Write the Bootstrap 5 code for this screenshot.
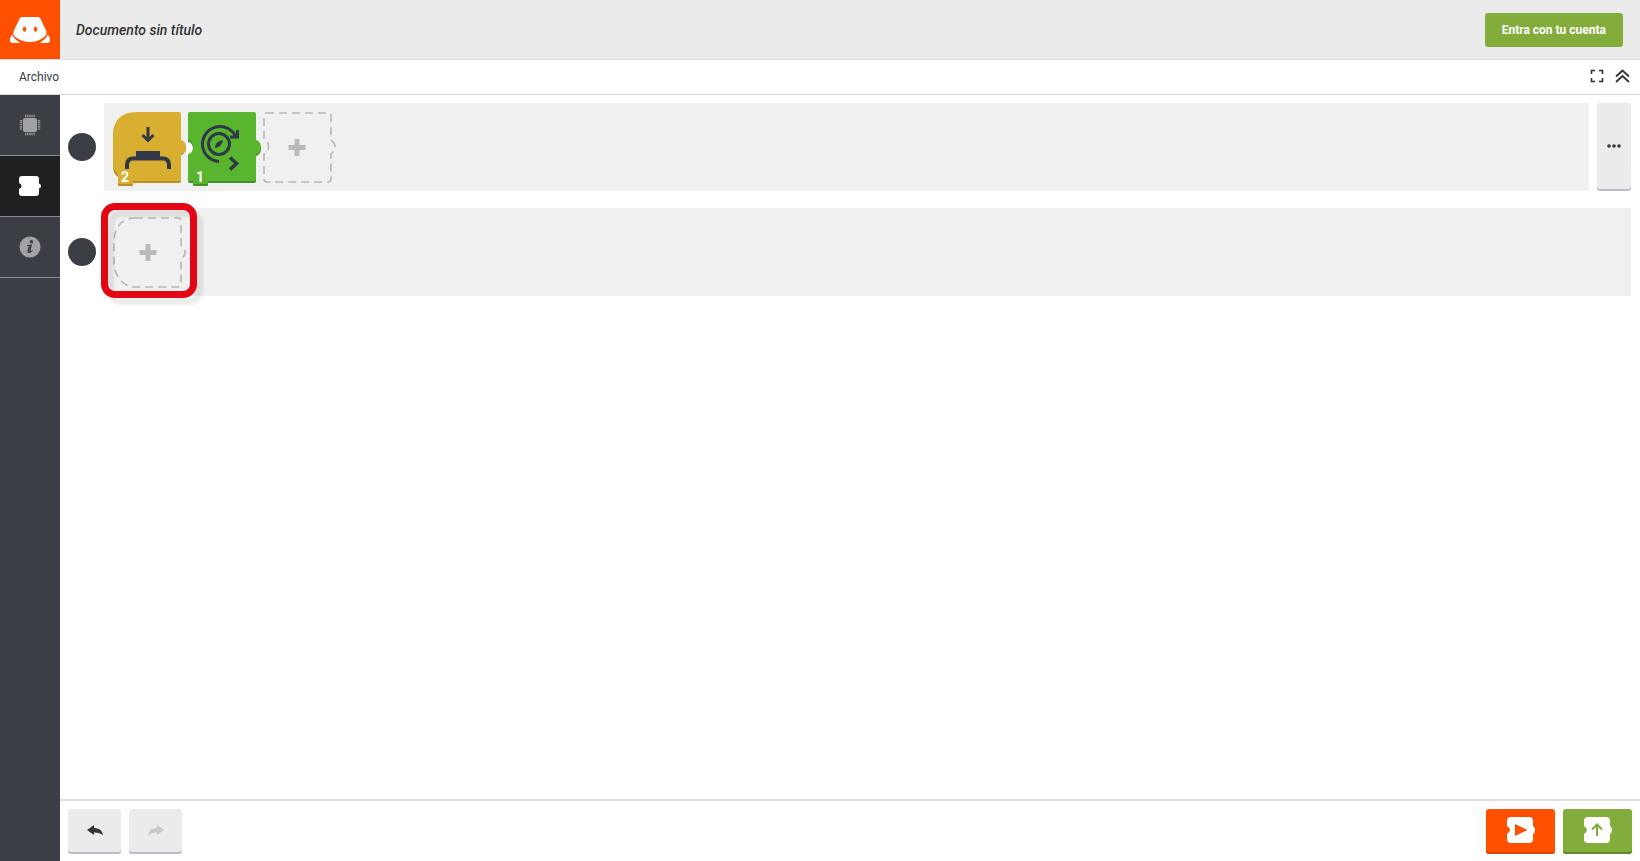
<!DOCTYPE html>
<html lang="es">
<head>
<meta charset="utf-8">
<meta name="viewport" content="width=device-width, initial-scale=1">
<title>Documento sin título</title>
<link href="https://cdn.jsdelivr.net/npm/bootstrap@5.3.0/dist/css/bootstrap.min.css" rel="stylesheet">
<style>
body{font-family:Roboto,"Liberation Sans",sans-serif;font-size:12px;line-height:16px;color:#373b44;background:#fff}
svg{display:block;overflow:visible}
.topbar{height:60px;background:#ebebeb;border-bottom:1px solid #ddd}
.brand{width:60px;height:59px;background:#ff5000}
.doc-title{font-size:14px;line-height:20px;font-weight:500;font-style:italic;color:#373435;padding-left:16px}
.btn-login{--bs-btn-bg:#82ad3a;--bs-btn-color:#fff;--bs-btn-hover-bg:#759c34;--bs-btn-hover-color:#fff;--bs-btn-border-width:0;font-size:12px;line-height:18px;font-weight:700;padding:8px 17px;border-radius:3px;margin-right:17px}
.menubar{height:35px;border-bottom:1px solid #d4d4d4;padding:0 10px 0 19px}
.menubar button,.sidebar button,.slot{background:none;border:0;padding:0;color:inherit}
.menu-tools{gap:11px;padding-bottom:2px}
.sidebar{width:60px;background:#3b3e45}
.sidebar button{height:61px;border-bottom:1px solid #8b8d92;color:#a0a2a6}
.sidebar button.active{background:#1f2022;color:#fff}
.workspace{padding:8px 9px 0 8px;gap:17px}
.line-dot{width:28px;height:28px;border-radius:50%;background:#3b3e45;margin-right:8px}
.track{height:88px;background:#f0f0f0;padding:9px}
.tile{width:75px;height:70px;position:relative}
.tile .num{position:absolute;left:8px;bottom:-3px;font-size:14px;line-height:16px;font-weight:700;color:#fff}
.slot:hover path{stroke:#888}
.mark-ring{position:absolute;left:-12px;top:-14px;width:96px;height:95px;border:7px solid #e30613;border-radius:14px;filter:drop-shadow(6px 7px 1px rgba(0,0,0,.07));pointer-events:none}
.btn-flat{--bs-btn-bg:#ebebeb;--bs-btn-border-width:0;--bs-btn-disabled-bg:#ebebeb;--bs-btn-disabled-opacity:1;--bs-btn-color:#373435;--bs-btn-disabled-color:#c8c8c8;--bs-btn-hover-bg:#e0e0e0;border-radius:3px;box-shadow:inset 0 -2px 0 #b7bdc6;padding:0}
.btn-more{width:34px;height:88px;margin-left:8px}
.bottombar{height:62px;border-top:2px solid #e0e0e0;padding:0 8px}
.btn-hist{width:53px;height:45px}
.btn-run{width:69px;height:45px;padding:0 0 2px;border-radius:3px;--bs-btn-border-width:0}
.run-orange{--bs-btn-bg:#ff5000;--bs-btn-hover-bg:#e84900;box-shadow:inset 0 -2px 0 #d74707}
.run-green{--bs-btn-bg:#82ad3a;--bs-btn-hover-bg:#759c34;box-shadow:inset 0 -2px 0 #648629}
</style>
</head>
<body>
<div class="d-flex flex-column vh-100 overflow-hidden">
<header class="topbar d-flex align-items-center flex-shrink-0">
  <a href="#" class="brand d-block" aria-label="Inicio">
    <svg width="60" height="59" viewBox="0 0 60 59"><g fill="#fff"><path d="M22 17H38Q39.500 17 40.300 18.500L46.300 31Q47.300 34 45 36.500Q38 42 30 42Q22 42 14.500 36.500Q12.500 34 13.700 31L19.700 18.500Q20.500 17 22 17Z"/><path d="M12 34.500Q14 39 20 42.500L18 43H12.500Q10 42.500 10 40.500Q10 37.500 12 34.500ZM48 34.500Q46 39 40 42.500L42 43H47.500Q50 42.500 50 40.500Q50 37.500 48 34.500Z"/></g><g fill="#ff5000"><ellipse cx="24.500" cy="29.300" rx="1.700" ry="2.700"/><ellipse cx="35.500" cy="29.300" rx="1.700" ry="2.700"/></g></svg>
  </a>
  <div class="doc-title">Documento sin título</div>
  <button type="button" class="btn btn-login ms-auto">Entra con tu cuenta</button>
</header>
<nav class="menubar d-flex align-items-center flex-shrink-0">
  <button type="button">Archivo</button>
  <div class="menu-tools d-flex align-items-center ms-auto">
    <button type="button" aria-label="Pantalla completa"><svg width="14" height="14" viewBox="0 0 14 14" fill="none" stroke="#303036" stroke-width="1.600"><path d="M1.500 5V1.500H5M9 1.500H12.500V5M12.500 9V12.500H9M5 12.500H1.500V9"/></svg></button>
    <button type="button" aria-label="Contraer"><svg width="15" height="14" viewBox="0 0 15 14" fill="none" stroke="#303036" stroke-width="1.800"><path d="M1 7.500L7.500 1.500L14 7.500M1 13L7.500 7L14 13"/></svg></button>
  </div>
</nav>
<div class="d-flex flex-grow-1">
  <aside class="sidebar d-flex flex-column flex-shrink-0">
    <button type="button" class="d-flex justify-content-center align-items-center" aria-label="Hardware"><svg width="22" height="22" viewBox="0 0 22 22"><rect x="4" y="4" width="14" height="14" rx="2" fill="currentColor"/><path d="M6 2H16M6 20H16M2 6V16M20 6V16" stroke="#909297" stroke-width="2.500" stroke-dasharray="1.400 .700"/></svg></button>
    <button type="button" class="active d-flex justify-content-center align-items-center" aria-label="Bloques"><svg width="22" height="20" viewBox="0 0 22 20" fill="currentColor"><path d="M3 0H17Q20 0 20 3V7.500Q22 8 22 10Q22 12 20 12.500V17Q20 20 17 20H3Q0 20 0 17V13Q2.500 12 2.500 10Q2.500 8 0 7V3Q0 0 3 0Z"/></svg></button>
    <button type="button" class="d-flex justify-content-center align-items-center" aria-label="Información"><svg width="22" height="22" viewBox="0 0 22 22"><circle cx="11" cy="11" r="10.500" fill="currentColor"/><g fill="#3b3e45"><circle cx="12.400" cy="5.700" r="1.700"/><path d="M8 9L13 8.500L11.500 14.500Q11.500 15.500 13.500 14L13.800 14.700Q11.500 17.500 9.300 17Q8 16.500 8.500 14.600L9.800 10.200L8 9.800Z"/></g></svg></button>
  </aside>
  <main class="d-flex flex-column flex-grow-1">
    <div class="workspace d-flex flex-column flex-grow-1">
      <div class="d-flex align-items-center">
        <span class="line-dot flex-shrink-0"></span>
        <div class="track d-flex flex-grow-1">
          <div class="tile"><svg width="75" height="75" viewBox="0 0 75 75"><path transform="translate(0 1)" fill="#b88f20" d="M24 0H66Q68 0 68 2V28C70 28 73 31 73 35C73 39 70 42 68 42V68Q68 70 66 70H20V72Q20 73 19 73H6Q5 73 5 72V64Q0 60 0 54V24Q0 0 24 0Z"/><path fill="#d8af30" d="M24 0H66Q68 0 68 2V28C70 28 73 31 73 35C73 39 70 42 68 42V67Q68 69 66 69H20V71Q20 72 19 72H6Q5 72 5 71V62Q0 58 0 52V24Q0 0 24 0Z"/><g fill="none" stroke="#303848" stroke-width="3"><path d="M35 15V28M29.500 23L35 28.500L40.500 23"/><path stroke-width="4" d="M14 57V53Q14 46.500 20 46.500H50Q56 46.500 56 53V57"/></g><rect x="23" y="39" width="24" height="7" fill="#303848"/></svg><span class="num">2</span></div>
          <div class="tile"><svg width="75" height="75" viewBox="0 0 75 75"><path d="M-1 27C3 28 5 31 5 35C5 39 3 42 -1 43Z" fill="#fff"/><path transform="translate(0 2)" fill="#43902a" d="M2 0H66Q68 0 68 2V28C70 28 73 31 73 35C73 39 70 42 68 42V67Q68 69 66 69H20V71Q20 72 19 72H6Q5 72 5 71V69H2Q0 69 0 67V42C3 42 5 39 5 35C5 31 3 28 0 28V2Q0 0 2 0Z"/><path fill="#5ab52e" d="M2 0H66Q68 0 68 2V28C70 28 73 31 73 35C73 39 70 42 68 42V67Q68 69 66 69H20V71Q20 72 19 72H6Q5 72 5 71V69H2Q0 69 0 67V42C3 42 5 39 5 35C5 31 3 28 0 28V2Q0 0 2 0Z"/><g fill="none" stroke="#303848" stroke-width="3"><circle cx="31" cy="32" r="10.500"/><path d="M31 49.500A17.500 17.500 0 1 1 48 25M49.500 18V25H42"/><path stroke-width="3.500" d="M42 45.500L48.500 51.500L42 57.500"/></g><path d="M27 36Q27 29 35 28Q34 35 27 36Z" fill="#303848"/></svg><span class="num">1</span></div>
          <button type="button" class="tile slot" aria-label="Añadir bloque"><svg width="75" height="70" viewBox="0 0 75 70"><path d="M3 1H65Q68 1 68 4V28L71 31Q73 35 71 39L68 42V67Q68 70 65 70H4Q1 70 1 67V42L5 39Q6 35 5 31L1 28V3Q1 1 3 1Z" fill="none" stroke="#b6b6b6" stroke-width="1.600" stroke-dasharray="8 5"/><path d="M34 27V44M25.500 35.500H42.500" fill="none" stroke="#bababa" stroke-width="5"/></svg></button>
        </div>
        <button type="button" class="btn btn-flat btn-more d-flex align-items-center justify-content-center" aria-label="Más opciones"><svg width="14" height="4" viewBox="0 0 14 4" fill="currentColor"><circle cx="2" cy="1" r="1.800"/><circle cx="7" cy="1" r="1.800"/><circle cx="12" cy="1" r="1.800"/></svg></button>
      </div>
      <div class="d-flex align-items-center">
        <span class="line-dot flex-shrink-0"></span>
        <div class="track d-flex flex-grow-1">
          <div class="tile"><button type="button" class="slot" aria-label="Añadir bloque inicial"><svg width="75" height="70" viewBox="0 0 75 70"><path d="M22 1H65Q68 1 68 4V28L71 31Q73 35 71 39L68 42V67Q68 70 65 70H20Q6 68 1 50V24Q2 2 22 1Z" fill="none" stroke="#b6b6b6" stroke-width="1.600" stroke-dasharray="8 5"/><path d="M35 27V44M26.500 35.500H43.500" fill="none" stroke="#bababa" stroke-width="5"/></svg></button><span class="mark-ring"></span></div>
        </div>
      </div>
    </div>
    <footer class="bottombar d-flex align-items-center gap-2 flex-shrink-0">
      <button type="button" class="btn btn-flat btn-hist d-flex align-items-center justify-content-center" aria-label="Deshacer"><svg width="16" height="12" viewBox="0 0 16 12" fill="currentColor"><path d="M0 5L7 0V3Q15 3 16 10Q12 7 7 7.500V10Z"/></svg></button>
      <button type="button" disabled class="btn btn-flat btn-hist d-flex align-items-center justify-content-center" aria-label="Rehacer"><svg width="16" height="12" viewBox="0 0 16 12" fill="currentColor"><path d="M16 5L9 0V3Q1 3 0 10Q4 7 9 7.500V10Z"/></svg></button>
      <button type="button" class="btn btn-run run-orange ms-auto d-flex align-items-center justify-content-center" aria-label="Ejecutar"><svg width="28" height="26" viewBox="0 0 28 26"><path fill="#fff" d="M4 0H22Q26 0 26 4V9Q28 10 28 13Q28 16 26 17V22Q26 26 22 26H4Q0 26 0 22V17Q3 15 3 13Q3 11 0 9V4Q0 0 4 0Z"/><path fill="#ff5000" d="M8 7L20.500 13L8 19Z"/></svg></button>
      <button type="button" class="btn btn-run run-green d-flex align-items-center justify-content-center" aria-label="Cargar"><svg width="28" height="26" viewBox="0 0 28 26"><path fill="#fff" d="M4 0H22Q26 0 26 4V9Q28 10 28 13Q28 16 26 17V22Q26 26 22 26H4Q0 26 0 22V17Q3 15 3 13Q3 11 0 9V4Q0 0 4 0Z"/><path d="M13 19V8M8 12.500L13 7.500L18 12.500" fill="none" stroke="#82ad3a" stroke-width="2"/></svg></button>
    </footer>
  </main>
</div>
</div>
<script src="https://cdn.jsdelivr.net/npm/bootstrap@5.3.0/dist/js/bootstrap.bundle.min.js"></script>
</body>
</html>
